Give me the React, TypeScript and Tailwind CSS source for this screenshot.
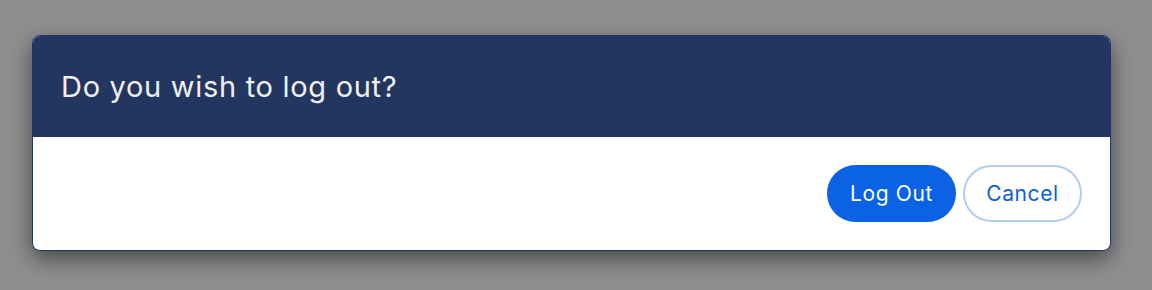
export default function App() {
  return (
    <div className="h-[290px] w-[1152px] bg-[#8f8f92] pl-8 pr-[41px] pt-[35px] font-['Inter',sans-serif]">
      <div className="overflow-hidden rounded-lg border border-[#223660] bg-white shadow-[0_8px_22px_rgba(0,0,0,0.5)]">
        <div className="flex h-[101px] items-center bg-[#223660] px-7">
          <h2 className="text-[29px] font-normal tracking-[0.7px] text-[#eef0f4]">
            Do you wish to log out?
          </h2>
        </div>
        <div className="flex justify-end gap-[7px] px-7 py-7">
          <button className="h-[57px] w-[129px] rounded-full bg-[#0b62e4] text-[21px] tracking-[0.6px] text-white">
            Log Out
          </button>
          <button className="h-[57px] w-[119px] rounded-full border-2 border-[#b4cbf2] bg-white text-[21px] tracking-[0.6px] text-[#0b5fdc]">
            Cancel
          </button>
        </div>
      </div>
    </div>
  );
}
